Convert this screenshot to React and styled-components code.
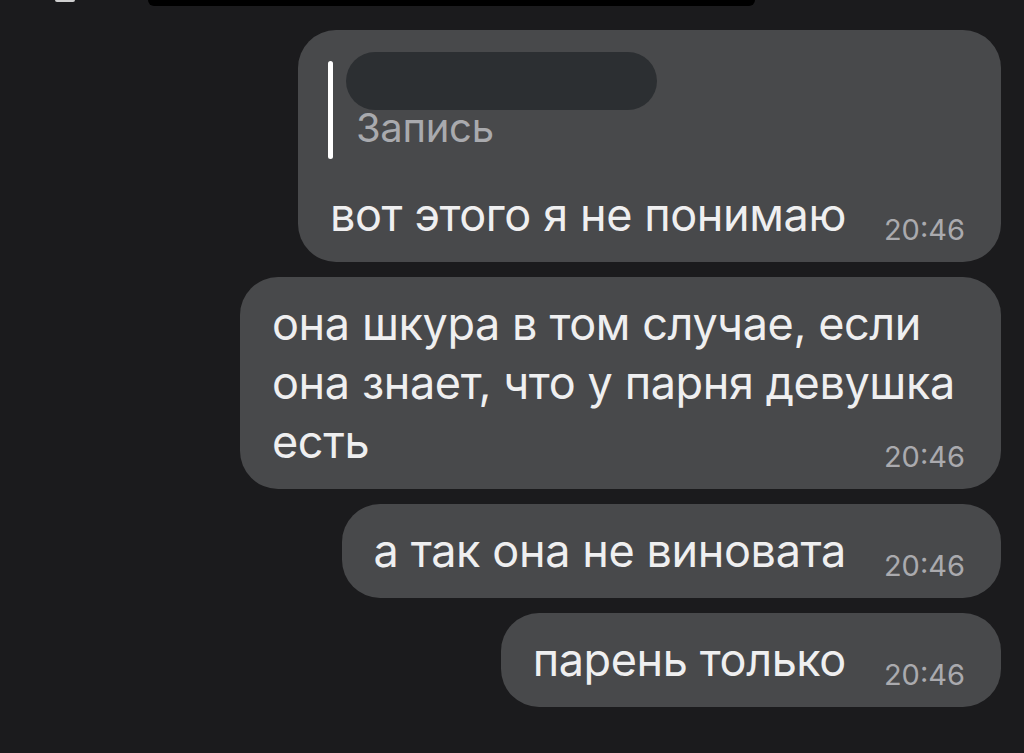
import React from 'react';
import styled, { createGlobalStyle } from 'styled-components';

const GlobalStyle = createGlobalStyle`
  html, body {
    margin: 0;
    padding: 0;
    background: #1b1b1d;
  }
  body {
    font-family: Inter, "Noto Sans", sans-serif;
    -webkit-font-smoothing: antialiased;
  }
`;

const Screen = styled.div`
  width: 1024px;
  height: 753px;
  overflow: hidden;
  background: #1b1b1d;
`;

const TopStrip = styled.div`
  display: flex;
  align-items: flex-start;
  height: 6px;
  padding-left: 55px;
`;

const Smudge = styled.div`
  width: 20px;
  height: 2px;
  background: #cfcfcf;
  border-radius: 0 0 6px 6px;
  filter: blur(0.6px);
`;

const CutBubble = styled.div`
  margin-left: 73px;
  width: 607px;
  height: 6px;
  background: #000;
  border-radius: 0 0 9px 9px;
`;

const Thread = styled.div`
  display: flex;
  flex-direction: column;
  align-items: flex-end;
  gap: 15px;
  padding: 24px 23px 0 0;
`;

const Bubble = styled.div`
  box-sizing: border-box;
  width: ${p => (p.$width ? `${p.$width}px` : 'auto')};
  padding: 17px 36px 18px 32px;
  background: #48494b;
  border-radius: 38px;
`;

const Reply = styled.div`
  display: flex;
  margin: 5px 0 26px -2px;
`;

const ReplyBar = styled.div`
  width: 5px;
  height: 98px;
  margin-top: 9px;
  background: #fff;
  border-radius: 3px;
`;

const ReplyBody = styled.div`
  display: flex;
  flex-direction: column;
  margin-left: 13px;
`;

const HiddenName = styled.div`
  width: 311px;
  height: 58px;
  background: #2c2f32;
  border-radius: 29px;
`;

const ReplyLabel = styled.div`
  margin: -2px 0 0 10px;
  font-size: 40px;
  line-height: 40px;
  letter-spacing: -0.3px;
  color: #a9aaae;
`;

const Line = styled.div`
  display: flex;
  align-items: flex-end;
  font-size: 45px;
  line-height: 59px;
  letter-spacing: -0.4px;
  color: #efeff0;
  white-space: nowrap;
`;

const Time = styled.span`
  margin-left: auto;
  padding-left: 38px;
  font-size: 29px;
  line-height: 29px;
  letter-spacing: 0;
  color: #aaaaae;
`;

const messages = [
  { reply: 'Запись', lines: ['вот этого я не понимаю'] },
  {
    width: 761,
    lines: ['она шкура в том случае, если', 'она знает, что у парня девушка', 'есть'],
  },
  { lines: ['а так она не виновата'] },
  { lines: ['парень только'] },
];

function Message({ reply, lines, width }) {
  return (
    <Bubble $width={width}>
      {reply && (
        <Reply>
          <ReplyBar />
          <ReplyBody>
            <HiddenName />
            <ReplyLabel>{reply}</ReplyLabel>
          </ReplyBody>
        </Reply>
      )}
      {lines.map((text, i) => (
        <Line key={i}>
          <span>{text}</span>
          {i === lines.length - 1 && <Time>20:46</Time>}
        </Line>
      ))}
    </Bubble>
  );
}

export default function App() {
  return (
    <Screen>
      <GlobalStyle />
      <TopStrip>
        <Smudge />
        <CutBubble />
      </TopStrip>
      <Thread>
        {messages.map((m, i) => (
          <Message key={i} {...m} />
        ))}
      </Thread>
    </Screen>
  );
}
